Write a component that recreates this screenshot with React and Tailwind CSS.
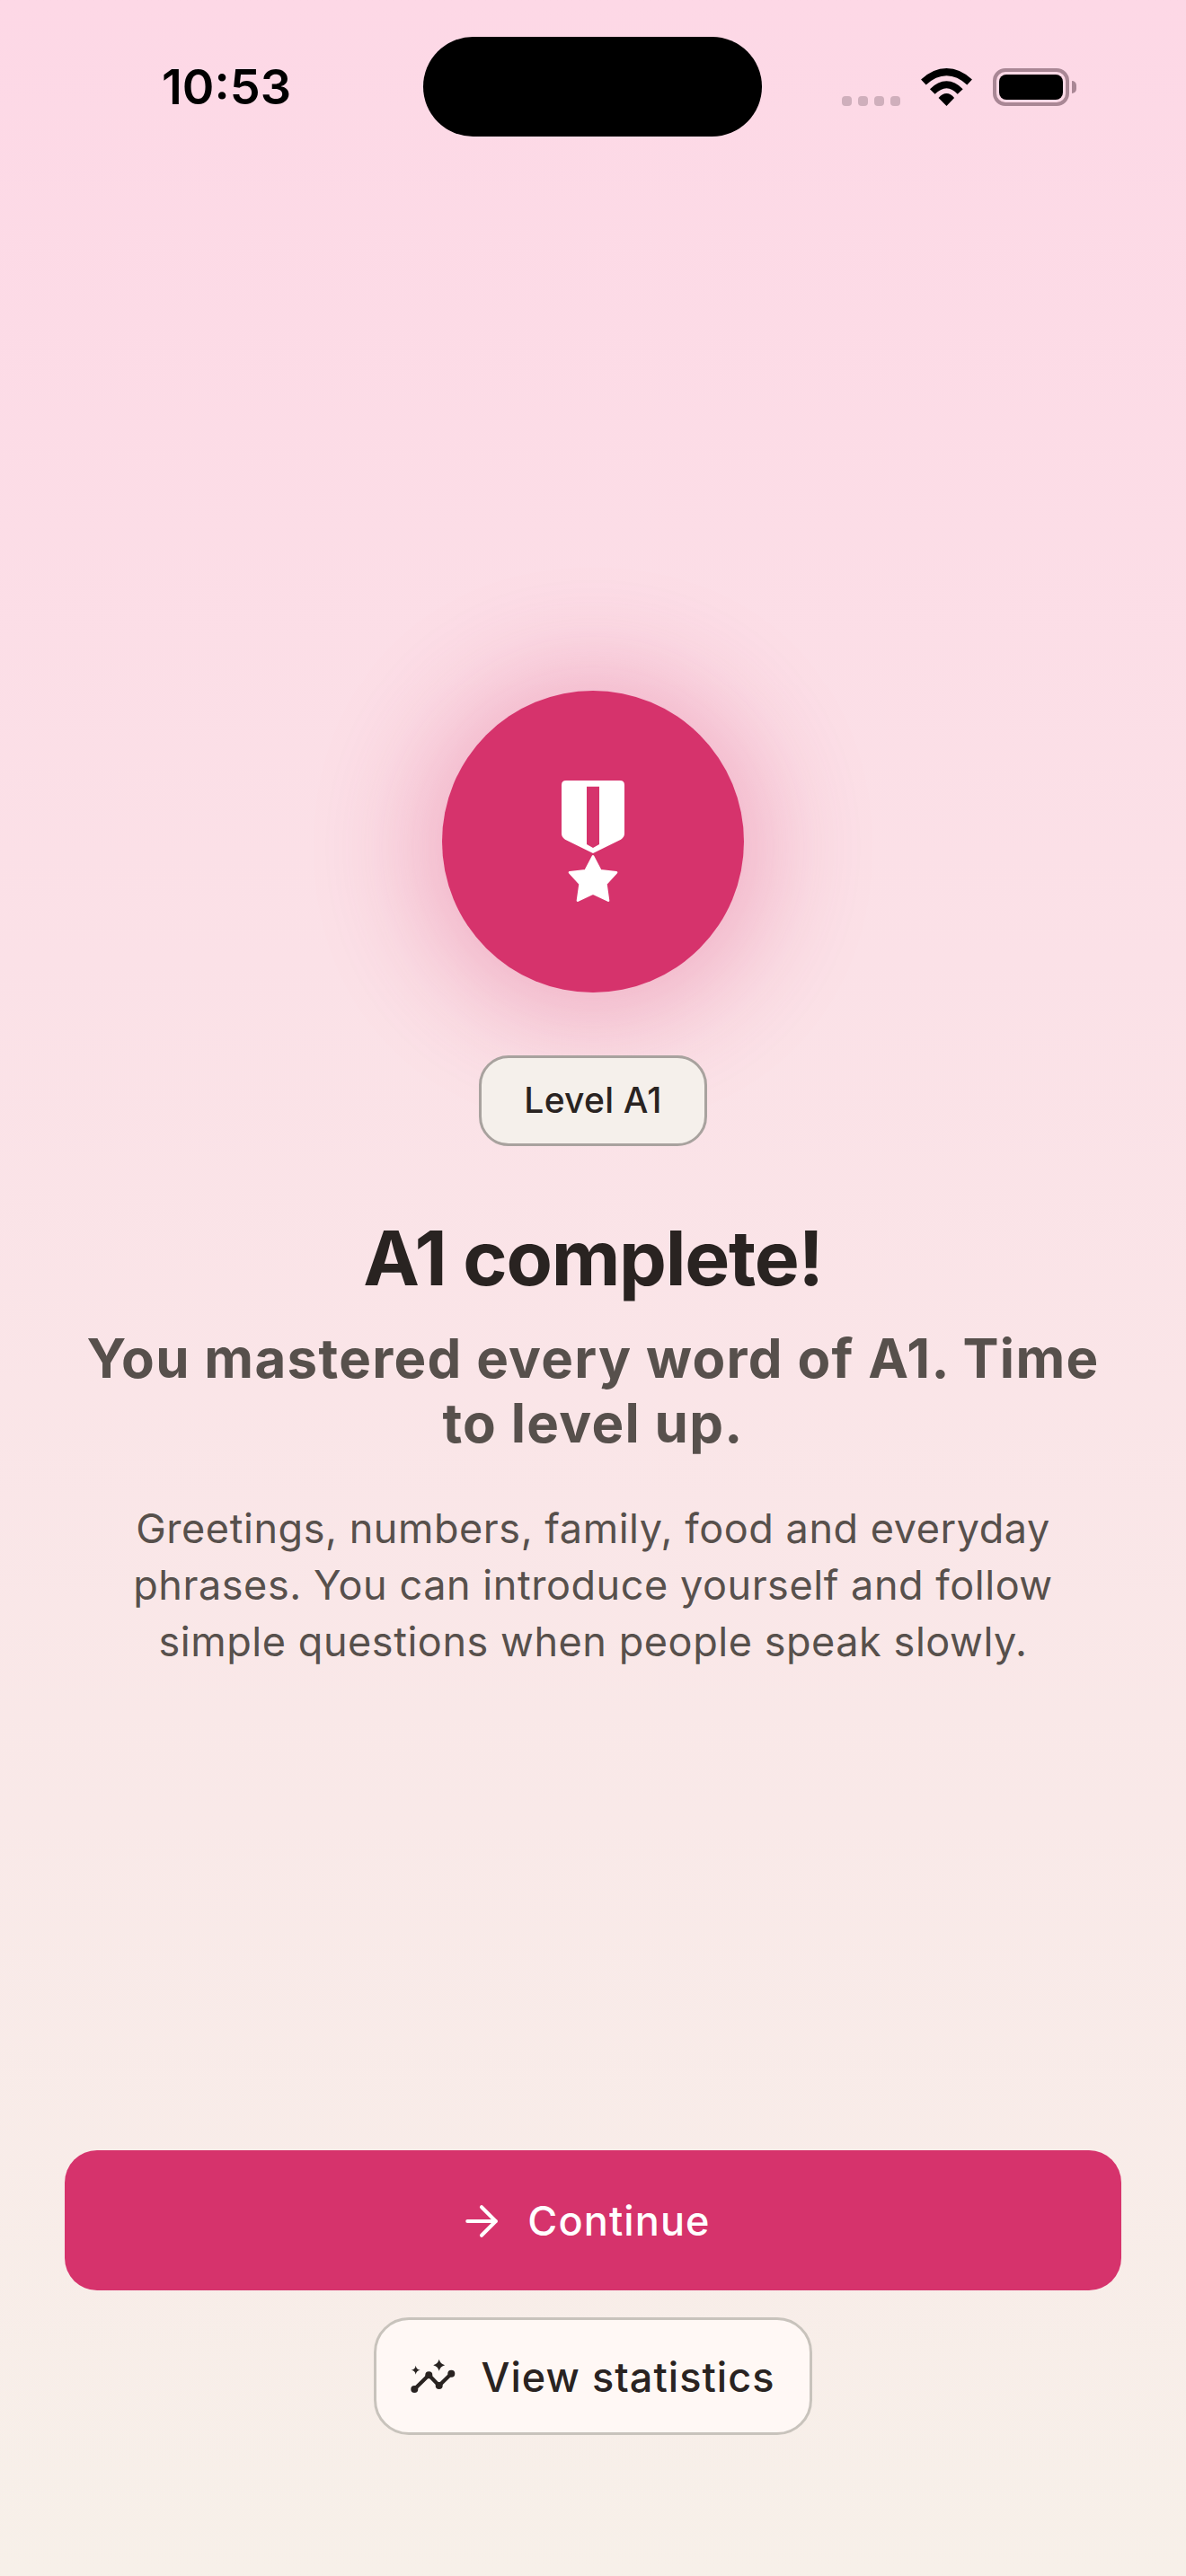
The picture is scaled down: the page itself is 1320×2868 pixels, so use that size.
import { ArrowRight } from 'lucide-react';

const MedalIcon = () => (
    <svg width="70" height="136" viewBox="135 85 210 408" fill="#fff">
        <path
            fillRule="evenodd"
            d="M150 85H330Q345 85 345 100V262Q345 275 333 282L240 328L147 282Q135 275 135 262V100Q135 85 150 85ZM219 105V298L240 310L261 298V105Z"
        />
        <path
            d="M240 338L265 386L318 392L283 430L291 486L240 462L189 486L197 430L162 392L215 386Z"
            stroke="#fff"
            strokeWidth="8"
            strokeLinejoin="round"
        />
    </svg>
);

const WifiIcon = () => (
    <svg width="57" height="42" viewBox="375 75 172 127" fill="#000">
        <path d="M375 113Q415 75 461 75Q507 75 547 113L530 131Q497 100 461 100Q425 100 392 131Z" />
        <path d="M405 145Q432 118 461 118Q490 118 516 145L498 162Q480 142 461 142Q442 142 422 162Z" />
        <path d="M434 175Q447 160 461 160Q475 160 487 175L461 202Z" />
    </svg>
);

const StatsIcon = () => (
    <svg className="mb-[4px]" width="50" height="38" viewBox="9 10 50 38" fill="#292321">
        <path d="M13.3 44L29.3 28.3L40.7 40L54.3 26.7" fill="none" stroke="#292321" strokeWidth="4.2" strokeLinejoin="round" />
        <circle cx="13.3" cy="44" r="4" />
        <circle cx="29.3" cy="28.3" r="4" />
        <circle cx="40.7" cy="40" r="4" />
        <circle cx="54.3" cy="26.7" r="4" />
        <path d="M14.7 17.7Q15.4 22 19.7 22.7Q15.4 23.4 14.7 27.7Q14 23.4 9.7 22.7Q14 22 14.7 17.7Z" />
        <path d="M40.7 10.8Q42 16 47.2 17.3Q42 18.6 40.7 23.8Q39.4 18.6 34.2 17.3Q39.4 16 40.7 10.8Z" />
    </svg>
);

const StatusBar = () => (
    <div className="flex items-center h-[111px] mt-[41px] pl-[180px]">
        <span className="w-[291px] text-[54px] leading-none font-semibold text-black">10:53</span>
        <div className="w-[377px] h-[111px] rounded-full bg-black" />
        <div className="flex items-end ml-[89px] h-[42px]">
            <div className="flex gap-[7px] mr-[23px]">
                {[0, 1, 2, 3].map((i) => (
                    <div key={i} className="w-[11px] h-[11px] rounded-[4px] bg-[#cfafbc]" />
                ))}
            </div>
            <WifiIcon />
            <div className="ml-[23px] w-[85px] h-[42px] p-[3px] rounded-[14px] border-[4px] border-[#a98795]">
                <div className="w-full h-full rounded-[8px] bg-black" />
            </div>
            <div className="ml-[3px] mb-[14px] w-[5px] h-[14px] rounded-r-full bg-[#a98795]" />
        </div>
    </div>
);

export default function App() {
    return (
        <div className="flex flex-col w-[1320px] h-[2868px] bg-gradient-to-b from-[#fdd8e6] to-[#f7f0e9] font-['Inter',sans-serif]">
            <StatusBar />

            <main className="flex flex-col items-center flex-1 pt-[617px] text-center">
                <div className="flex items-center justify-center w-[336px] h-[336px] rounded-full bg-[#d6336c] shadow-[0_6px_120px_24px_rgba(214,51,108,0.3)]">
                    <MedalIcon />
                </div>

                <div className="flex items-center justify-center mt-[70px] w-[254px] h-[101px] rounded-[33px] border-[3px] border-[#a8a29e] bg-[#f5f0eb] text-[39px] font-medium tracking-[0.25px] text-[#292321]">
                    Level A1
                </div>

                <h1 className="mt-[72px] text-[84px] leading-[105px] font-bold tracking-[-1.25px] text-[#292321]">
                    A1 complete!
                </h1>
                <h2 className="mt-[23px] w-[1130px] text-[60px] leading-[72px] font-bold tracking-[1.3px] text-[#57504c]">
                    You mastered every word of A1. Time to level up.
                </h2>
                <p className="mt-[50px] w-[1060px] text-[45px] leading-[63px] tracking-[0.55px] text-[#57504c]">
                    Greetings, numbers, family, food and everyday phrases. You can introduce yourself and follow simple
                    questions when people speak slowly.
                </p>
            </main>

            <div className="flex flex-col items-center pb-[157px] px-[72px]">
                <button className="flex items-center justify-center gap-[24px] w-full h-[156px] pt-[2px] pr-[20px] rounded-[36px] bg-[#d6336c] text-[45px] font-medium tracking-[1.1px] text-white">
                    <ArrowRight size={54} strokeWidth={1.8} />
                    Continue
                </button>
                <button className="flex items-center justify-center gap-[28px] mt-[30px] w-[488px] h-[131px] pt-[2px] rounded-[39px] border-[3px] border-[#c8c3bc] bg-[#fff8f5] text-[45px] font-medium tracking-[1.05px] text-[#292321]">
                    <StatsIcon />
                    View statistics
                </button>
            </div>
        </div>
    );
}
